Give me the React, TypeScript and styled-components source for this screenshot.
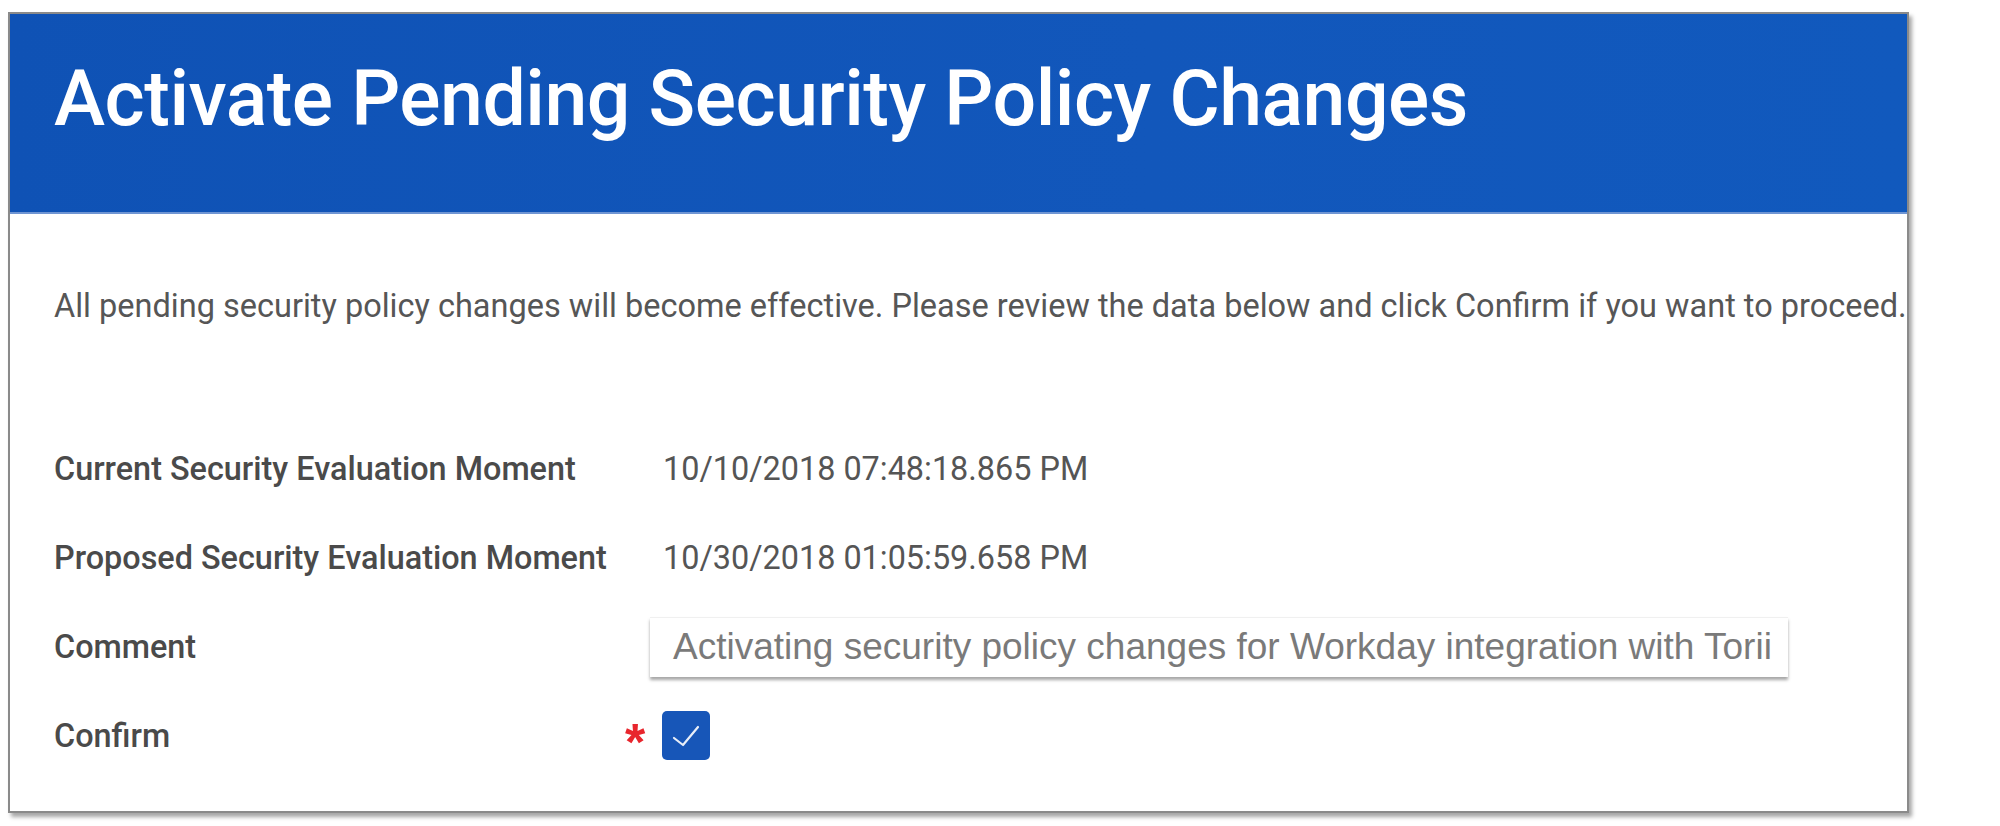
import React from "react";
import styled, { createGlobalStyle } from "styled-components";

const Global = createGlobalStyle`
  html, body { margin: 0; padding: 0; background: #ffffff; }
  body { font-family: Roboto, "Noto Sans", Arial, sans-serif; }
`;

const Page = styled.div`
  padding: 12px 0 0 8px;
  width: 2000px;
  height: 826px;
  box-sizing: border-box;
  background: #ffffff;
`;

const Panel = styled.section`
  width: 1901px;
  height: 801px;
  box-sizing: border-box;
  border: 2px solid #8a8a8a;
  box-shadow: 3px 4px 4px rgba(0, 0, 0, 0.35);
  background: #ffffff;
  display: flex;
  flex-direction: column;
`;

const Header = styled.header`
  height: 200px;
  flex-shrink: 0;
  background: linear-gradient(90deg, #0f52b5 0%, #1257bb 60%, #1159bd 100%);
  border-bottom: 2px solid #6f95d3;
  display: flex;
  align-items: center;
  padding: 0 0 28px 44px;
  box-sizing: border-box;
`;

const Title = styled.h1`
  margin: 0;
  color: #ffffff;
  font-family: Roboto, sans-serif;
  font-weight: 500;
  font-size: 77px;
  letter-spacing: -0.5px;
  white-space: nowrap;
`;

const Body = styled.div`
  padding: 72px 0 0 44px;
  display: flex;
  flex-direction: column;
`;

const Intro = styled.p`
  margin: 0 0 98px 0;
  color: #565656;
  font-family: Roboto, sans-serif;
  font-size: 32.5px;
  line-height: 40px;
  white-space: nowrap;
`;

const Form = styled.div`
  display: grid;
  grid-template-columns: 560px 36px 1fr;
  grid-auto-rows: 89px;
  align-items: center;
`;

const Label = styled.div`
  color: #4a4a4a;
  font-family: Roboto, sans-serif;
  font-weight: 500;
  font-size: 32.4px;
  white-space: nowrap;
`;

const Marker = styled.div`
  color: #e8262d;
  font-family: "Liberation Sans", Arial, sans-serif;
  font-size: 52px;
  font-weight: 700;
  line-height: 1;
  text-align: center;
  padding: 12px 0 0 6px;
`;

const Value = styled.div`
  color: #555555;
  font-family: Roboto, sans-serif;
  font-size: 32.4px;
  padding-left: 13px;
  white-space: nowrap;
`;

const Input = styled.div`
  width: 1138px;
  height: 60px;
  box-sizing: border-box;
  padding: 0 0 0 23px;
  display: flex;
  align-items: center;
  background: #ffffff;
  border-top: 1px solid #f0f0f0;
  box-shadow: 0 3px 3px rgba(0, 0, 0, 0.35);
  color: #7a7a7a;
  font-family: "Liberation Sans", Arial, sans-serif;
  font-size: 37px;
  white-space: nowrap;
`;

const Checkbox = styled.div`
  width: 48px;
  height: 49px;
  margin-left: 12px;
  border-radius: 5px;
  background: #1756b8;
  display: flex;
  align-items: center;
  justify-content: center;
`;

export default function App() {
  return (
    <>
      <Global />
      <Page>
        <Panel>
          <Header>
            <Title>Activate Pending Security Policy Changes</Title>
          </Header>
          <Body>
            <Intro>
              All pending security policy changes will become effective. Please review the data below and click Confirm if you want to proceed.
            </Intro>
            <Form>
              <Label>Current Security Evaluation Moment</Label>
              <div />
              <Value>10/10/2018 07:48:18.865 PM</Value>

              <Label>Proposed Security Evaluation Moment</Label>
              <div />
              <Value>10/30/2018 01:05:59.658 PM</Value>

              <Label>Comment</Label>
              <div />
              <Input>Activating security policy changes for Workday integration with Torii</Input>

              <Label>Confirm</Label>
              <Marker>*</Marker>
              <div>
                <Checkbox>
                  <svg width="28" height="24" viewBox="0 0 28 24" fill="none">
                    <path d="M2 14 L11 21 L26 3" stroke="#e8eef8" strokeWidth="2.2" strokeLinecap="round" strokeLinejoin="round" />
                  </svg>
                </Checkbox>
              </div>
            </Form>
          </Body>
        </Panel>
      </Page>
    </>
  );
}
